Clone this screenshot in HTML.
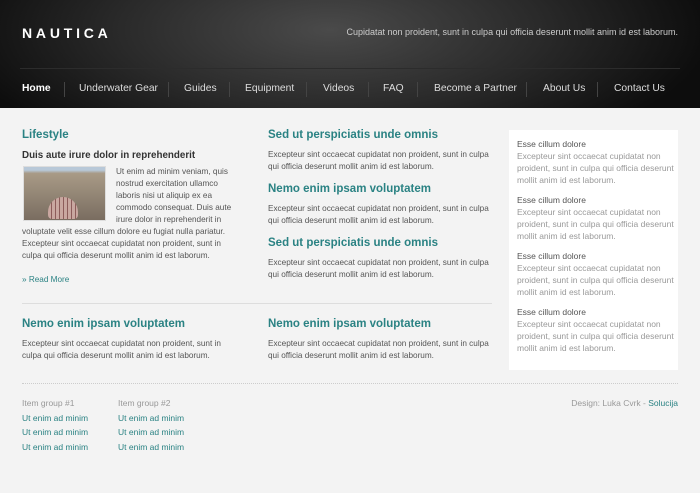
<!DOCTYPE html>
<html><head><meta charset="utf-8"><style>
*{margin:0;padding:0;box-sizing:border-box}
body{width:700px;height:493px;background:#f3f3f3;font-family:"Liberation Sans",Arial,sans-serif;position:relative;overflow:hidden;color:#555}
.hd{position:absolute;left:0;top:0;width:700px;height:108px;background:radial-gradient(ellipse 380px 140px at 330px 30px,#4a4a4a 0%,#2a2a2a 55%,#0d0d0d 100%)}
.logo{position:absolute;left:22px;top:25px;color:#fff;font-weight:bold;font-size:14px;letter-spacing:3.8px}
.tag{position:absolute;right:22px;top:27px;color:#ccc;font-size:9px}
.line{position:absolute;left:20px;right:20px;top:68px;height:1px;background:#2c2c2c}
.nav{position:absolute;left:22px;top:83px;font-size:10.3px;color:#ddd;white-space:nowrap}
.nav span{position:absolute;top:0}
.sep{position:absolute;top:82px;width:1px;height:15px;background:#444}
.a{position:absolute;font-size:8.2px;line-height:12px;color:#555;white-space:nowrap}
h2{position:absolute;font-size:11.5px;color:#2a8283;font-weight:bold}
h3{position:absolute;font-size:9.8px;color:#333;font-weight:bold}
.t{color:#2a8283}
.side{position:absolute;left:509px;top:130px;width:169px;height:240px;background:#fff}
.side div{position:absolute;left:8px;font-size:8.5px;line-height:12px;color:#999;white-space:nowrap}
.side b{font-weight:normal;color:#555}
.img{position:absolute;left:23px;top:166px;width:83px;height:55px;border:1px solid #ddd;background:linear-gradient(#b8c8d8 0,#b8c8d8 6%,#a89a86 12%,#8f8272 60%,#7a6d60 100%)}
</style></head><body>
<div class="hd">
<div class="logo">NAUTICA</div>
<div class="tag">Cupidatat non proident, sunt in culpa qui officia deserunt mollit anim id est laborum.</div>
<div class="line"></div>
<div class="nav">
<span style="left:0;color:#fff;font-weight:bold">Home</span>
<span style="left:57px">Underwater Gear</span>
<span style="left:162px">Guides</span>
<span style="left:223px">Equipment</span>
<span style="left:301px">Videos</span>
<span style="left:361px">FAQ</span>
<span style="left:412px">Become a Partner</span>
<span style="left:521px">About Us</span>
<span style="left:592px">Contact Us</span>
</div>
<div class="sep" style="left:64px"></div><div class="sep" style="left:168px"></div><div class="sep" style="left:229px"></div><div class="sep" style="left:306px"></div><div class="sep" style="left:368px"></div><div class="sep" style="left:417px"></div><div class="sep" style="left:526px"></div><div class="sep" style="left:597px"></div>
</div>

<h2 style="left:22px;top:129px">Lifestyle</h2>
<h3 style="left:22px;top:150px">Duis aute irure dolor in reprehenderit</h3>
<div class="img"><div style="position:absolute;left:24px;top:30px;width:30px;height:22px;border-radius:15px 15px 4px 4px;background:repeating-linear-gradient(90deg,#c9a7a0 0 3px,#8c5c5a 3px 4px)"></div></div>
<div class="a" style="left:116px;top:166px">Ut enim ad minim veniam, quis<br>nostrud exercitation ullamco<br>laboris nisi ut aliquip ex ea<br>commodo consequat. Duis aute<br>irure dolor in reprehenderit in</div>
<div class="a" style="left:22px;top:226px">voluptate velit esse cillum dolore eu fugiat nulla pariatur.<br>Excepteur sint occaecat cupidatat non proident, sunt in<br>culpa qui officia deserunt mollit anim id est laborum.</div>
<div class="a t" style="left:22px;top:274px">» Read More</div>

<h2 style="left:268px;top:129px">Sed ut perspiciatis unde omnis</h2>
<div class="a" style="left:268px;top:149px">Excepteur sint occaecat cupidatat non proident, sunt in culpa<br>qui officia deserunt mollit anim id est laborum.</div>
<h2 style="left:268px;top:183px">Nemo enim ipsam voluptatem</h2>
<div class="a" style="left:268px;top:203px">Excepteur sint occaecat cupidatat non proident, sunt in culpa<br>qui officia deserunt mollit anim id est laborum.</div>
<h2 style="left:268px;top:237px">Sed ut perspiciatis unde omnis</h2>
<div class="a" style="left:268px;top:257px">Excepteur sint occaecat cupidatat non proident, sunt in culpa<br>qui officia deserunt mollit anim id est laborum.</div>

<div style="position:absolute;left:22px;top:303px;width:470px;height:1px;background:#ddd"></div>
<h2 style="left:22px;top:318px">Nemo enim ipsam voluptatem</h2>
<div class="a" style="left:22px;top:338px">Excepteur sint occaecat cupidatat non proident, sunt in<br>culpa qui officia deserunt mollit anim id est laborum.</div>
<h2 style="left:268px;top:318px">Nemo enim ipsam voluptatem</h2>
<div class="a" style="left:268px;top:338px">Excepteur sint occaecat cupidatat non proident, sunt in culpa<br>qui officia deserunt mollit anim id est laborum.</div>

<div class="side">
<div style="top:8px"><b>Esse cillum dolore</b><br>Excepteur sint occaecat cupidatat non<br>proident, sunt in culpa qui officia deserunt<br>mollit anim id est laborum.</div>
<div style="top:64px"><b>Esse cillum dolore</b><br>Excepteur sint occaecat cupidatat non<br>proident, sunt in culpa qui officia deserunt<br>mollit anim id est laborum.</div>
<div style="top:120px"><b>Esse cillum dolore</b><br>Excepteur sint occaecat cupidatat non<br>proident, sunt in culpa qui officia deserunt<br>mollit anim id est laborum.</div>
<div style="top:176px"><b>Esse cillum dolore</b><br>Excepteur sint occaecat cupidatat non<br>proident, sunt in culpa qui officia deserunt<br>mollit anim id est laborum.</div>
</div>

<div style="position:absolute;left:22px;top:383px;width:656px;border-top:1px dotted #ccc"></div>
<div class="a" style="left:22px;top:396px;font-size:8.5px;line-height:14.5px;color:#999">Item group #1<br><span class="t">Ut enim ad minim<br>Ut enim ad minim<br>Ut enim ad minim</span></div>
<div class="a" style="left:118px;top:396px;font-size:8.5px;line-height:14.5px;color:#999">Item group #2<br><span class="t">Ut enim ad minim<br>Ut enim ad minim<br>Ut enim ad minim</span></div>
<div class="a" style="right:22px;top:396px;font-size:8.5px;line-height:14.5px;color:#999">Design: Luka Cvrk - <span class="t">Solucija</span></div>
</body></html>
